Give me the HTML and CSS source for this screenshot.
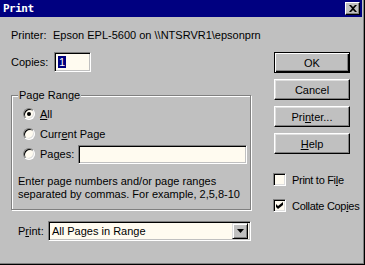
FILE: index.html
```html
<!DOCTYPE html>
<html lang="en">
<head>
    <meta charset="UTF-8">
    <title>Print</title>
    <link rel="stylesheet" href="styles.css">
</head>
<body>
    <div class="window">
        <div class="frame">
            <div class="titlebar">
                <span class="title">Print</span>
                <div class="close">
                    <svg width="8" height="7" viewBox="0 0 8 7">
                        <path d="M0 0h2l2 2 2-2h2L5 3.5 8 7H6L4 5 2 7H0l3-3.5z" fill="#000"/>
                    </svg>
                </div>
            </div>

            <div class="printer-row">
                <span class="printer-label">Printer:</span>
                <span>Epson EPL-5600 on \\NTSRVR1\epsonprn</span>
            </div>

            <div class="main">
                <div class="left">
                    <div class="copies-row">
                        <span class="copies-label">Copies:</span>
                        <div class="field copies-box"><span class="selected">1</span></div>
                    </div>

                    <fieldset class="group">
                        <legend>Page Range</legend>
                        <div class="radio-row">
                            <span class="radio checked"></span>
                            <span><u>A</u>ll</span>
                        </div>
                        <div class="radio-row">
                            <span class="radio"></span>
                            <span>Curr<u>e</u>nt Page</span>
                        </div>
                        <div class="radio-row">
                            <span class="radio"></span>
                            <span>Pa<u>g</u>es:</span>
                            <div class="field pages-box"></div>
                        </div>
                        <p class="hint">Enter page numbers and/or page ranges<br>separated by commas. For example, 2,5,8-10</p>
                    </fieldset>

                    <div class="print-row">
                        <span class="print-label">P<u>r</u>int:</span>
                        <div class="field select">
                            <span class="select-text">All Pages in Range</span>
                            <div class="drop">
                                <svg width="7" height="4" viewBox="0 0 7 4">
                                    <path d="M0 0h7L3.5 4z" fill="#000"/>
                                </svg>
                            </div>
                        </div>
                    </div>
                </div>

                <div class="right">
                    <div class="button default">OK</div>
                    <div class="button">Cancel</div>
                    <div class="button">Pri<u>n</u>ter...</div>
                    <div class="button"><u>H</u>elp</div>

                    <div class="check-row first">
                        <span class="checkbox"></span>
                        <span class="check-label">Print to Fi<u>l</u>e</span>
                    </div>
                    <div class="check-row">
                        <span class="checkbox">
                            <svg width="7" height="7" viewBox="0 0 7 7">
                                <path d="M0 2l2 2 5-4v3L2 7 0 5z" fill="#000"/>
                            </svg>
                        </span>
                        <span class="check-label">Collate Cop<u>i</u>es</span>
                    </div>
                </div>
            </div>
        </div>
    </div>
</body>
</html>
```

FILE: styles.css
```css
body {
    margin: 0;
    font-family: "Liberation Sans", Arial, sans-serif;
    font-size: 11px;
    color: #000;
    background: #c0c0c0;
}
.window {
    width: 365px;
    height: 265px;
    box-sizing: border-box;
    border-right: 1px solid #000;
    border-bottom: 1px solid #000;
}
.frame {
    height: 100%;
    box-sizing: border-box;
    border-right: 1px solid #808080;
    border-bottom: 1px solid #808080;
    padding-right: 1px;
}
.titlebar {
    height: 17px;
    background: #000080;
    display: flex;
    align-items: center;
    justify-content: space-between;
    padding: 0 2px 0 3px;
}
.title {
    color: #fff;
    font-family: "DejaVu Sans Mono", monospace;
    font-weight: bold;
    font-size: 11px;
    letter-spacing: -0.5px;
}
.close {
    width: 15px;
    height: 13px;
    box-sizing: border-box;
    background: #c0c0c0;
    border: 1px solid;
    border-color: #fff #000 #000 #fff;
    box-shadow: inset -1px -1px #808080;
    display: flex;
    align-items: center;
    justify-content: center;
}

/* sunken edit boxes */
.field {
    box-sizing: border-box;
    background: #fffbf0;
    border: 1px solid;
    border-color: #808080 #fff #fff #808080;
    box-shadow: inset 1px 1px #000, inset -1px -1px #c0c0c0;
}

.printer-row {
    display: flex;
    padding: 11px 0 0 11px;
    line-height: 14px;
}
.printer-label {
    width: 42px;
}
.main {
    display: flex;
    padding: 10px 0 0 11px;
}
.left {
    width: 242px;
}
.copies-row {
    display: flex;
    align-items: center;
    height: 20px;
}
.copies-label {
    width: 43px;
}
.copies-box {
    width: 37px;
    height: 20px;
    padding: 3px 0 0 3px;
}
.selected {
    display: inline-block;
    background: #000080;
    color: #fff;
    line-height: 12px;
    padding: 0 1px;
}

.group {
    width: 240px;
    box-sizing: border-box;
    margin: 17px 0 0 0;
    padding: 0 0 8px 6px;
    border: 1px solid #808080;
    box-shadow: 1px 1px 0 #fff, inset 1px 1px 0 #fff;
}
.group legend {
    padding: 0 1px;
    line-height: 12px;
    background: #c0c0c0;
}
.radio-row {
    display: flex;
    align-items: center;
    height: 20px;
    margin-left: 5px;
}
.radio-row:first-of-type {
    margin-top: 3px;
}
.radio {
    width: 12px;
    height: 12px;
    box-sizing: border-box;
    margin-right: 5px;
    border-radius: 50%;
    border: 1px solid;
    border-color: #808080 #fff #fff #808080;
    box-shadow: inset 1px 1px #000, inset -1px -1px #dfdfdf;
    background: #fffbf0;
    display: flex;
    align-items: center;
    justify-content: center;
}
.radio.checked::after {
    content: "";
    width: 4px;
    height: 4px;
    border-radius: 50%;
    background: #000;
}
.pages-box {
    width: 169px;
    height: 19px;
    margin-left: 4px;
}
.hint {
    margin: 11px 0 0 0;
    line-height: 13px;
}

.print-row {
    display: flex;
    align-items: center;
    margin-top: 11px;
    padding-left: 7px;
}
.print-label {
    width: 30px;
}
.select {
    width: 203px;
    height: 20px;
    display: flex;
    align-items: center;
    justify-content: space-between;
    padding: 0 2px 0 3px;
}
.drop {
    width: 16px;
    height: 16px;
    box-sizing: border-box;
    background: #c0c0c0;
    border: 1px solid;
    border-color: #dfdfdf #000 #000 #dfdfdf;
    box-shadow: inset 1px 1px #fff, inset -1px -1px #808080;
    display: flex;
    align-items: center;
    justify-content: center;
}

.right {
    margin-left: 21px;
    width: 77px;
}
.button {
    width: 76px;
    height: 21px;
    box-sizing: border-box;
    margin-bottom: 6px;
    border: 1px solid;
    border-color: #fff #000 #000 #fff;
    box-shadow: inset -1px -1px #808080, inset 1px 1px #dfdfdf;
    display: flex;
    align-items: center;
    justify-content: center;
}
.button.default {
    border-color: #000;
    box-shadow: inset 1px 1px #fff, inset -1px -1px #000, inset -2px -2px #808080;
}
.check-row {
    display: flex;
    align-items: center;
    height: 13px;
    margin-top: 13px;
    margin-left: -1px;
    white-space: nowrap;
}
.check-row.first {
    margin-top: 19px;
}
.check-label {
    letter-spacing: -0.3px;
}
.checkbox {
    flex: none;
    width: 13px;
    height: 13px;
    box-sizing: border-box;
    margin-right: 6px;
    border: 1px solid;
    border-color: #808080 #fff #fff #808080;
    box-shadow: inset 1px 1px #000, inset -1px -1px #dfdfdf;
    background: #fffbf0;
    display: flex;
    align-items: center;
    justify-content: center;
}
```
